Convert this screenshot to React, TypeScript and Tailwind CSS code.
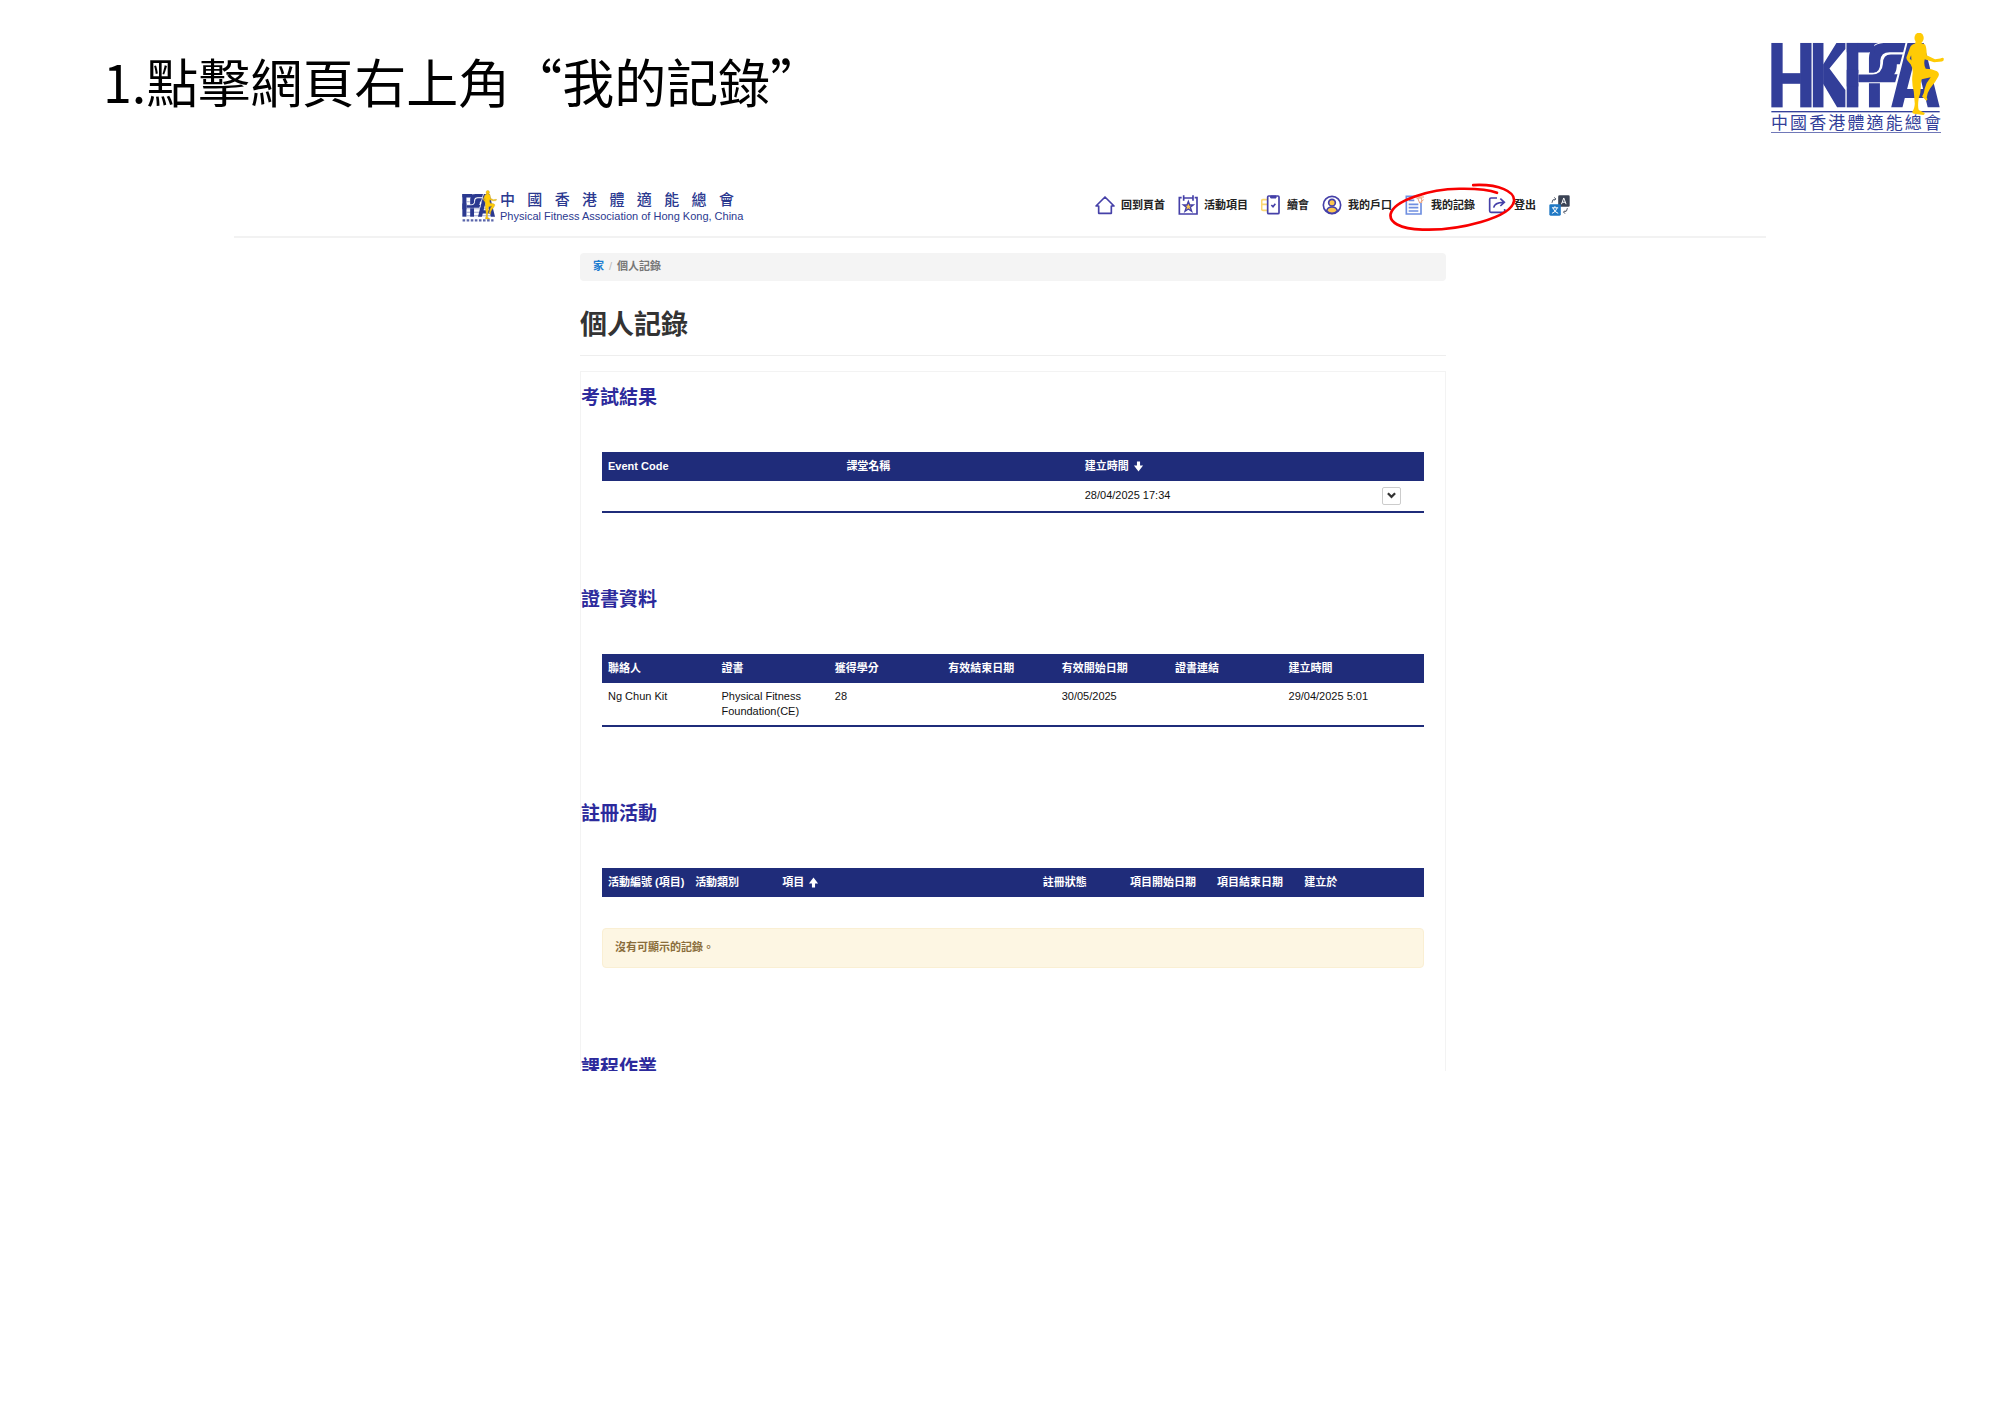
import type { ReactNode } from "react";

type Column = { label: string; width: string; sort?: "asc" | "desc" };

const examColumns: Column[] = [
  { label: "Event Code", width: "w-[29%]" },
  { label: "課堂名稱", width: "w-[29%]" },
  { label: "建立時間", width: "w-[34%]", sort: "desc" },
  { label: "", width: "w-[8%]" },
];

const certColumns: Column[] = [
  { label: "聯絡人", width: "w-[13.8%]" },
  { label: "證書", width: "w-[13.8%]" },
  { label: "獲得學分", width: "w-[13.8%]" },
  { label: "有效結束日期", width: "w-[13.8%]" },
  { label: "有效開始日期", width: "w-[13.8%]" },
  { label: "證書連結", width: "w-[13.8%]" },
  { label: "建立時間", width: "w-[17.2%]" },
];

const eventColumns: Column[] = [
  { label: "活動編號 (項目)", width: "w-[10.6%]" },
  { label: "活動類別", width: "w-[10.6%]" },
  { label: "項目", width: "w-[31.7%]", sort: "asc" },
  { label: "註冊狀態", width: "w-[10.6%]" },
  { label: "項目開始日期", width: "w-[10.6%]" },
  { label: "項目結束日期", width: "w-[10.6%]" },
  { label: "建立於", width: "w-[15.3%]" },
];

// Shared by both logos
function Athlete() {
  return (
    <g fill="#ffcb05">
      <ellipse cx="271" cy="24" rx="14" ry="16" />
      <path d="M261 34 L259 41 Q246 44 243 55 L233 82 Q232 88 237 93 L246 104 Q254 118 251 135 Q248 160 255 185 L258 222 Q257 238 251 245 Q249 251 256 252 L284 256 Q292 253 284 248 L270 241 Q266 230 270 205 Q278 185 276 160 L279 148 L306 142 Q292 158 288 176 Q286 192 280 200 L293 213 Q298 211 294 203 Q296 188 304 176 Q320 158 329 140 Q334 130 325 124 Q308 117 291 117 Q284 105 288 88 L316 97 L340 95 Q347 92 345 85 Q342 82 335 86 L319 88 L294 76 Q294 52 289 44 L278 40 L279 33 Z" />
      <path d="M247 76 L243 86 L248 92 Z" fill="#323e99" />
    </g>
  );
}

function Monogram({ color }: { color: string }) {
  return (
    <>
      <g fill={color}>
        <rect x="53" y="39" width="35" height="194" />
        <rect x="53" y="39" width="102" height="28" />
        <rect x="120" y="150" width="33" height="83" />
        <path
          fillRule="evenodd"
          d="M187 233 L236 39 H285 L333 233 H297 L290 205 H228 L221 233 Z M235 178 H283 L263 92 H257 Z"
        />
      </g>
      {/* interlocking bands */}
      <g fill={color} stroke="#fff" strokeWidth="6" paintOrder="stroke">
        <path d="M230 39 H164 Q122 42 120 84 V129 H134 Q154 126 154 100 V92 Q156 67 182 67 H223 Z" />
        <path d="M162 102 Q162 74 186 74 H221 L213 103 H204 Q204 124 196 133 H206 L199 157 H88 V134 H130 Q160 132 162 102 Z" />
      </g>
      <rect x="53" y="120" width="35" height="50" fill={color} />
      <rect x="86" y="39" width="50" height="28" fill={color} />
    </>
  );
}

function HkpfaLogo() {
  return (
    <div className="w-[174px] shrink-0 text-[#323e99]">
      <svg viewBox="-175 9 524 246" className="block w-full" role="img" aria-label="HKPFA">
        <g fill="#323e99">
          <rect x="-174" y="39" width="34" height="194" />
          <rect x="-87" y="39" width="34" height="194" />
          <rect x="-142" y="130" width="57" height="32" />
          <rect x="-49" y="39" width="32" height="194" />
          <path d="M22 39 H49 V57 L1 116 L49 181 V233 H24 L-18 162 V104 Z" />
        </g>
        <Monogram color="#323e99" />
        <rect x="-174" y="244" width="507" height="4" fill="#323e99" />
        <Athlete />
      </svg>
      <div className="mr-1 border-b border-[#7078b8] text-[17px] leading-[17px] [text-align-last:justify]">
        中國香港體適能總會
      </div>
    </div>
  );
}

function SiteLogo() {
  return (
    <a href="#home" className="mt-1 flex items-center gap-[3px] text-[#2b3990]">
      <svg viewBox="50 5 300 290" className="h-[34px] w-[35px]" aria-hidden="true">
        <path d="M90 105 H300 M90 135 H300 M90 165 H300 M90 195 H300 M90 225 H300" stroke="#8d95c8" strokeWidth="7" />
        <Monogram color="#2b3990" />
        <g stroke="#caa12c" strokeWidth="4">
          <Athlete />
        </g>
        <path d="M55 265 H320" stroke="#5b66ab" strokeWidth="18" strokeDasharray="22 13" />
      </svg>
      <span className="flex flex-col">
        <span className="w-[234px] text-[15px] font-medium leading-[18px] [text-align-last:justify]">
          中國香港體適能總會
        </span>
        <span className="w-[234px] whitespace-nowrap text-[11px] leading-[14px]">
          Physical Fitness Association of Hong Kong, China
        </span>
      </span>
    </a>
  );
}

function Icon({ children }: { children: ReactNode }) {
  return (
    <svg
      viewBox="0 0 60 60"
      className="size-5 shrink-0"
      fill="none"
      stroke="#4540a8"
      strokeWidth="5"
      aria-hidden="true"
    >
      {children}
    </svg>
  );
}

const HomeIcon = () => (
  <Icon>
    <path d="M3 33 L30 6 L57 33 H49 V55 H11 V33 Z" strokeLinejoin="round" />
  </Icon>
);

const CalendarIcon = () => (
  <Icon>
    <path d="M11 8 H4 V57 H57 V8 H50 M18 9 H43 M17 1 V17 M45 1 V17" />
    <path d="M31 19 L35 30 L46 30 L37 37 L41 49 L31 42 L21 49 L25 37 L16 30 L27 30 Z" fill="#fcc74e" strokeWidth="4" />
  </Icon>
);

const RenewIcon = () => (
  <Icon>
    <path d="M18 14 H6 Q2 14 2 18 V42 Q2 46 6 46 H18 M2 28 H18" stroke="#fbd872" />
    <rect x="20" y="3" width="34" height="53" rx="3" />
    <path d="M29 3 V9 H45 V3 Z" fill="#4540a8" strokeWidth="3" />
    <path d="M31 30 L36 35 L43 26" />
  </Icon>
);

const AccountIcon = () => (
  <Icon>
    <circle cx="30" cy="30" r="26" />
    <circle cx="30" cy="23" r="10" fill="#fcc74e" />
    <path d="M14 48 Q16 36 30 36 Q44 36 46 48 Q39 55 30 55 Q21 55 14 48 Z" fill="#fcc74e" />
  </Icon>
);

const RecordsIcon = () => (
  <Icon>
    <path d="M36 4 H4 V57 H48 V24" stroke="#6f8fe0" />
    <path d="M11 16 H28 M11 28 H40 M11 38 H40 M11 48 H40" stroke="#6f8fe0" />
    <path d="M34 9 H50 V24 M38 9 L44 24 L56 14 M40 6 L57 6" stroke="#eba27c" strokeWidth="3" />
  </Icon>
);

const LogoutIcon = () => (
  <Icon>
    <path d="M27 9 H9 Q5 9 5 13 V48 Q5 52 9 52 H46 Q50 52 50 48 V42" />
    <path d="M17 38 Q20 22 46 22 M37 11 L49 22 L37 33" />
  </Icon>
);

function LanguageIcon() {
  return (
    <svg viewBox="0 0 64 64" className="size-[21px]" aria-hidden="true">
      <rect x="28" y="1" width="35" height="35" rx="4" fill="#3b4354" />
      <rect x="1" y="28" width="35" height="35" rx="4" fill="#1f78c4" />
      <path d="M38 28 L45 9 L52 28 M40 22 H50" stroke="#fff" strokeWidth="3" fill="none" />
      <path d="M9 39 H28 M18 34 V39 M12 39 Q16 52 28 56 M25 39 Q21 52 9 56" stroke="#fff" strokeWidth="3" fill="none" />
      <path d="M9 24 Q9 12 20 12 M16 7 L21 12 L16 17 M56 40 Q56 52 45 52 M49 47 L44 52 L49 57" stroke="#555d6d" strokeWidth="3" fill="none" />
    </svg>
  );
}

function NavItem({ icon, label, children }: { icon: ReactNode; label: string; children?: ReactNode }) {
  return (
    <li className="relative">
      <a href={`#${label}`} className="flex items-center gap-1.5 whitespace-nowrap">
        {icon}
        {label}
      </a>
      {children}
    </li>
  );
}

function SortArrow({ direction }: { direction: "asc" | "desc" }) {
  return (
    <svg viewBox="0 0 10 12" className="size-[11px]" fill="currentColor" aria-hidden="true">
      {direction === "desc" ? (
        <path d="M3.3 0.5 H6.7 V5 H10 L5 11.5 L0 5 H3.3 Z" />
      ) : (
        <path d="M3.3 11.5 H6.7 V7 H10 L5 0.5 L0 7 H3.3 Z" />
      )}
    </svg>
  );
}

function SectionTitle({ children }: { children: ReactNode }) {
  return <h2 className="text-[19px] font-bold leading-[26px] text-[#2c2a9c]">{children}</h2>;
}

function RecordTable({ title, columns, children }: { title: string; columns: Column[]; children?: ReactNode }) {
  return (
    <section>
      <SectionTitle>{title}</SectionTitle>
      <div className="mt-[41px] px-[21px]">
        <table className="w-full table-fixed border-collapse text-left text-[11px] leading-[15px] text-[#111]">
          <thead className="bg-[#1f2c7a] text-white">
            <tr>
              {columns.map((col) => (
                <th key={col.label} className={`${col.width} whitespace-nowrap px-1.5 py-[7px] font-bold`}>
                  <span className="flex items-center gap-1">
                    {col.label}
                    {col.sort && <SortArrow direction={col.sort} />}
                  </span>
                </th>
              ))}
            </tr>
          </thead>
          {children}
        </table>
      </div>
    </section>
  );
}

export default function App() {
  return (
    <div className="min-h-screen bg-white font-['Liberation_Sans','Noto_Sans_CJK_TC',sans-serif]">
      <header className="flex items-start justify-between pl-[103px] pr-[55px] pt-[33px]">
        <h1 className="mt-[18px] font-['Noto_Sans_CJK_TC',sans-serif] text-[52px] leading-[60px] text-black">
          1.點擊網頁右上角“我的記錄”
        </h1>
        <HkpfaLogo />
      </header>

      <div className="mx-auto mt-[42px] max-w-[1532px]">
        <div className="flex h-[63px] items-center border-b-2 border-[#f2f2f2]">
          <div className="mx-auto flex w-full max-w-[1108px] items-center justify-between translate-x-4">
            <SiteLogo />
            <nav>
              <ul className="flex items-center gap-[13px] text-[11px] font-bold text-[#222]">
                <NavItem icon={<HomeIcon />} label="回到頁首" />
                <NavItem icon={<CalendarIcon />} label="活動項目" />
                <NavItem icon={<RenewIcon />} label="續會" />
                <NavItem icon={<AccountIcon />} label="我的戶口" />
                <NavItem icon={<RecordsIcon />} label="我的記錄">
                  {/* hand-drawn highlight */}
                  <svg
                    viewBox="0 0 380 146"
                    className="pointer-events-none absolute -left-4 -top-3 z-10 h-[49px] w-[127px] max-w-none"
                    fill="none"
                    stroke="#f80000"
                    strokeWidth="8"
                    strokeLinecap="round"
                    aria-hidden="true"
                  >
                    <path d="M252 6 C330 2 378 26 374 54 C366 103 210 143 100 139 C30 137 0 116 5 92 C15 52 120 18 210 17 C265 16 300 20 323 29" />
                  </svg>
                </NavItem>
                <NavItem icon={<LogoutIcon />} label="登出" />
                <li>
                  <button type="button" aria-label="Language" className="block">
                    <LanguageIcon />
                  </button>
                </li>
              </ul>
            </nav>
          </div>
        </div>

        <main className="mx-auto max-w-[892px] pl-[26px] pt-[15px]">
          <nav className="flex h-7 items-center rounded-sm bg-[#f4f4f4] px-[13px] text-[11px] font-bold">
            <a href="#home" className="text-[#1a7bd0]">家</a>
            <span className="px-[5px] font-normal text-[#bbb]">/</span>
            <span className="text-[#777]">個人記錄</span>
          </nav>

          <h2 className="mt-[26px] border-b border-[#eee] pb-3 text-[27px] font-bold leading-9 text-[#333]">
            個人記錄
          </h2>

          <div className="mt-[15px] border border-b-0 border-[#f3f3f3] pt-[13px]">
            <div className="flex flex-col gap-[74px]">
              <RecordTable title="考試結果" columns={examColumns}>
                <tbody>
                  <tr className="border-b-2 border-[#1f2c7a]">
                    <td />
                    <td />
                    <td className="px-1.5">28/04/2025 17:34</td>
                    <td className="py-1.5">
                      <button
                        type="button"
                        aria-label="更多"
                        className="ml-6 flex h-[18px] w-[19px] items-center justify-center rounded-xs border border-[#ccc]"
                      >
                        <svg viewBox="0 0 10 7" className="h-[7px] w-[9px]" fill="none" stroke="#333" strokeWidth="2.5" aria-hidden="true">
                          <path d="M1 1 L5 5 L9 1" />
                        </svg>
                      </button>
                    </td>
                  </tr>
                </tbody>
              </RecordTable>

              <RecordTable title="證書資料" columns={certColumns}>
                <tbody>
                  <tr className="border-b-2 border-[#1f2c7a] align-top">
                    <td className="px-1.5 py-[6px]">Ng Chun Kit</td>
                    <td className="px-1.5 py-[6px]">Physical Fitness Foundation(CE)</td>
                    <td className="px-1.5 py-[6px]">28</td>
                    <td />
                    <td className="px-1.5 py-[6px]">30/05/2025</td>
                    <td />
                    <td className="px-1.5 py-[6px]">29/04/2025 5:01</td>
                  </tr>
                </tbody>
              </RecordTable>

              <RecordTable title="註冊活動" columns={eventColumns} />
            </div>

            <div
              role="status"
              className="mx-[21px] mt-[31px] flex h-10 items-center rounded-sm border border-[#faefd3] bg-[#fdf6e3] px-3 text-[11px] font-bold text-[#8a6d3b]"
            >
              沒有可顯示的記錄。
            </div>

            <div className="mt-[87px] h-4 overflow-hidden">
              <SectionTitle>課程作業</SectionTitle>
            </div>
          </div>
        </main>
      </div>
    </div>
  );
}
